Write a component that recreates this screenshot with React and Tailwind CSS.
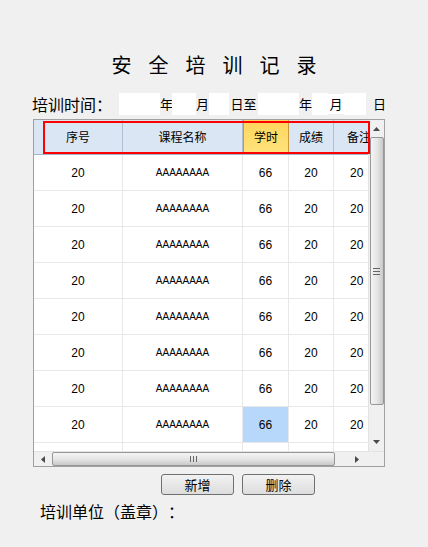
import React from "react";

const cjk = { fontFamily: '"Noto Sans CJK SC", "Liberation Sans", sans-serif' };
const latin = { fontFamily: '"Liberation Sans", Arial, sans-serif' };

const columns = [
  { key: "no", title: "序号", width: "w-[89px]" },
  { key: "name", title: "课程名称", width: "w-[120px]" },
  { key: "hours", title: "学时", width: "w-[46px]" },
  { key: "score", title: "成绩", width: "w-[45px]" },
  { key: "note", title: "备注", width: "w-[35px]" },
];

const rows = Array.from({ length: 9 }, (_, i) =>
  i < 8
    ? { no: "20", name: "AAAAAAAA", hours: "66", score: "20", note: "20" }
    : { no: "", name: "", hours: "", score: "", note: "" },
);

const TimeBox = ({ w }) => <div className={`h-[22px] bg-white ${w}`} />;

const Arrow = ({ dir }) => {
  const shapes = {
    up: "M0 4 L3.5 0 L7 4 Z",
    down: "M0 0 L7 0 L3.5 4 Z",
    left: "M4 0 L4 7 L0 3.5 Z",
    right: "M0 0 L4 3.5 L0 7 Z",
  };
  const vertical = dir === "up" || dir === "down";
  return (
    <svg
      width={vertical ? 7 : 4}
      height={vertical ? 4 : 7}
      viewBox={vertical ? "0 0 7 4" : "0 0 4 7"}
    >
      <path d={shapes[dir]} fill="#4a4a4a" />
    </svg>
  );
};

const Cell = ({ col, value, selected }) => {
  const isName = col.key === "name";
  const isNote = col.key === "note";
  return (
    <div
      className={`${col.width} shrink-0 h-full flex items-center ${
        isNote ? "justify-start pl-[16px]" : "justify-center border-r border-[#e8e8e8]"
      } ${selected ? "bg-[#b7d8fb]" : "bg-white"}`}
    >
      <span
        className={isName ? "text-[10px] text-black" : "text-[12px] text-black"}
        style={latin}
      >
        {value}
      </span>
    </div>
  );
};

export default function App() {
  return (
    <div
      className="w-[428px] h-[547px] bg-[#f0f0f0] overflow-hidden [text-spacing-trim:space-all]"
      style={cjk}
    >
      <div className="flex justify-center gap-[17px] pt-[52px] h-[90px] text-[20px] leading-[26px] text-black">
        {"安全培训记录".split("").map((ch) => (
          <span key={ch} style={{ fontFamily: '"Noto Sans CJK SC", serif' }}>
            {ch}
          </span>
        ))}
      </div>

      <div className="flex items-center h-[24px] mt-[2px] pl-[32px] text-[13px] text-black">
        <span className="text-[16px] w-[87px] whitespace-nowrap">培训时间：</span>
        <TimeBox w="w-[41px]" />
        <span className="w-[12px]">年</span>
        <TimeBox w="w-[24px]" />
        <span className="w-[13px] text-center">月</span>
        <TimeBox w="w-[20px]" />
        <span className="w-[29px] text-center">日至</span>
        <TimeBox w="w-[41px]" />
        <span className="w-[13px]">年</span>
        <TimeBox w="w-[16px]" />
        <span className="w-[16px] bg-white text-center">月</span>
        <TimeBox w="w-[22px]" />
        <span className="ml-[7px]">日</span>
      </div>

      <div className="relative ml-[33px] mt-[3px] w-[352px] h-[348px] border border-[#a0a0a0] bg-white flex flex-col">
        <div className="flex h-[331px]">
          <div className="w-[335px] overflow-hidden flex flex-col">
            <div className="flex h-[35px] shrink-0 border-b border-[#a3b4cb]">
              {columns.map((col) => (
                <div
                  key={col.key}
                  className={`${col.width} shrink-0 flex items-center text-[12px] text-black overflow-hidden ${
                    col.key === "hours"
                      ? "justify-center bg-gradient-to-b from-[#ffd55a] to-[#ffe37d] border-x border-[#c9993a]"
                      : col.key === "note"
                      ? "justify-start pl-[13px] bg-[#dae6f3]"
                      : "justify-center bg-[#dae6f3] border-r border-[#aebfd3]"
                  }`}
                >
                  <span className="whitespace-nowrap">{col.title}</span>
                </div>
              ))}
            </div>
            {rows.map((row, i) => (
              <div key={i} className="flex h-[36px] shrink-0 border-b border-[#e8e8e8]">
                {columns.map((col) => (
                  <Cell
                    key={col.key}
                    col={col}
                    value={row[col.key]}
                    selected={i === 7 && col.key === "hours"}
                  />
                ))}
              </div>
            ))}
          </div>

          <div className="w-[16px] bg-[#f0f0f0] border-l border-[#e3e3e3] flex flex-col items-center">
            <div className="h-[17px] flex items-center justify-center">
              <Arrow dir="up" />
            </div>
            <div className="w-[14px] h-[268px] rounded-[2px] border border-[#979797] bg-gradient-to-r from-[#f4f4f4] via-[#e6e6e6] to-[#c9c9c9] flex items-center justify-center">
              <div className="flex flex-col gap-[2px]">
                <div className="w-[7px] h-px bg-[#666]" />
                <div className="w-[7px] h-px bg-[#666]" />
                <div className="w-[7px] h-px bg-[#666]" />
              </div>
            </div>
            <div className="flex-1 flex items-end justify-center pb-[7px]">
              <Arrow dir="down" />
            </div>
          </div>
        </div>

        <div className="flex h-[15px] bg-[#f0f0f0] border-t border-[#e3e3e3]">
          <div className="w-[18px] flex items-center justify-center">
            <Arrow dir="left" />
          </div>
          <div className="w-[284px] h-[14px] rounded-[2px] border border-[#979797] bg-gradient-to-b from-[#f4f4f4] via-[#e6e6e6] to-[#c9c9c9] flex items-center justify-center">
            <div className="flex gap-[2px]">
              <div className="w-px h-[6px] bg-[#666]" />
              <div className="w-px h-[6px] bg-[#666]" />
              <div className="w-px h-[6px] bg-[#666]" />
            </div>
          </div>
          <div className="w-[33px] flex items-center justify-center pl-[10px]">
            <Arrow dir="right" />
          </div>
          <div className="w-[16px] bg-[#f0f0f0]" />
        </div>

        <div className="absolute left-[9px] top-[1px] w-[327px] h-[33px] border-2 border-[#ff0000] pointer-events-none" />
      </div>

      <div className="flex gap-[8px] ml-[161px] mt-[7px]">
        {["新增", "删除"].map((label) => (
          <button
            key={label}
            className="w-[73px] h-[21px] rounded-[3px] border border-[#707070] bg-gradient-to-b from-[#f2f2f2] to-[#dddddd] text-[13px] leading-none text-black"
          >
            {label}
          </button>
        ))}
      </div>

      <div className="ml-[40px] mt-[4px] text-[16px] text-black whitespace-nowrap">
        培训单位（盖章）：
      </div>
    </div>
  );
}
